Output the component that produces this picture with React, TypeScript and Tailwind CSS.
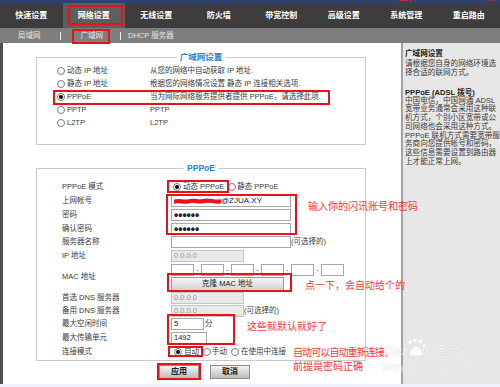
import React from "react";

const FONT = "font-['Liberation_Sans','Noto_Sans_CJK_SC',sans-serif]";

function Radio({ checked }: { checked?: boolean }) {
  return (
    <span className="w-[8px] h-[8px] rounded-full border border-[#7a7a7a] bg-white flex items-center justify-center shrink-0">
      {checked && <span className="w-[4px] h-[4px] rounded-full bg-black" />}
    </span>
  );
}

function Inp({ w, children, disabled }: { w: string; children?: React.ReactNode; disabled?: boolean }) {
  return (
    <div
      className={`${w} h-[12px] border flex items-center px-[2px] text-[7.5px] leading-[10px] overflow-hidden whitespace-nowrap ${
        disabled ? "bg-[#e9e9e9] border-[#c6c6c6] text-[#9a9a9a]" : "bg-white border-[#a8a8a8] text-[#222]"
      }`}
    >
      {children}
    </div>
  );
}

function Row({ h, label, children }: { h: string; label: string; children?: React.ReactNode }) {
  return (
    <div className={`${h} flex items-center pl-[25px]`}>
      <div className="w-[109px] text-[7.5px] leading-[10px] text-[#3a3a3a] whitespace-nowrap">{label}</div>
      <div className="flex items-center">{children}</div>
    </div>
  );
}

function WanRow({ checked, label, desc }: { checked?: boolean; label: string; desc: string }) {
  return (
    <div className="h-[13px] flex items-center pl-[20px] text-[7.5px] leading-[10px] text-[#3a3a3a] whitespace-nowrap">
      <div className="w-[93px] flex items-center gap-[2px]">
        <Radio checked={checked} />
        <span>{label}</span>
      </div>
      <span>{desc}</span>
    </div>
  );
}

function Box({ c }: { c: string }) {
  return <div className={`absolute border-2 border-[#e8121b] ${c}`} />;
}

const NAV = ["快速设置", "网络设置", "无线设置", "防火墙", "带宽控制", "高级设置", "系统管理", "重启路由"];

export default function App() {
  return (
    <div className={`relative w-[500px] h-[387px] overflow-hidden bg-white ${FONT}`}>
      {/* top strip */}
      <div className="h-[3px] bg-[#2c4372] relative overflow-hidden">
        <span className="absolute right-[4px] -top-[9px] text-[10px] leading-[12px] text-[#e2231a] whitespace-nowrap">
          固件: V1.24.1405.5 版
        </span>
      </div>
      {/* main nav */}
      <div className="h-[25px] bg-[#3d3d3d] flex">
        {NAV.map((t) => (
          <div
            key={t}
            className={`flex-1 flex items-center justify-center text-white font-bold text-[8px] leading-[10px] ${
              t === "网络设置" ? "bg-[#5e5e5e]" : ""
            }`}
          >
            {t}
          </div>
        ))}
      </div>
      {/* sub nav */}
      <div className="h-[15px] bg-[#7e7e7e] flex items-center pl-[18px] text-[7.5px] leading-[10px] text-[#e6e6e6] whitespace-nowrap">
        <span>局域网</span>
        <span className="ml-[19px] w-px h-[8px] bg-[#e8e8e8]" />
        <span className="ml-[20px]">广域网</span>
        <span className="ml-[17px] w-px h-[8px] bg-[#e8e8e8]" />
        <span className="ml-[7px]">DHCP 服务器</span>
      </div>

      {/* body */}
      <div className="h-[341px] flex">
        <div className="w-[3px] bg-[#4e4e4e]" />
        <div className="w-[398px] bg-white pl-[33px] pt-[14px]">
          {/* fieldset 1 */}
          <div className="relative w-[330px] h-[88px] border border-[#c9c9c9] pt-[6px]">
            <span className="absolute -top-[7px] left-1/2 -translate-x-1/2 bg-white px-[3px] text-[8.5px] leading-[12px] font-bold text-[#2b7fd4] whitespace-nowrap">
              广域网设置
            </span>
            <WanRow label="动态 IP 地址" desc="从您的网络中自动获取 IP 地址." />
            <WanRow label="静态 IP 地址" desc="根据您的网络情况设置 静态 IP 连接相关选项." />
            <WanRow checked label="PPPoE" desc="当为网际网络服务提供者提供 PPPoE，请选择此项." />
            <WanRow label="PPTP" desc="PPTP" />
            <WanRow label="L2TP" desc="L2TP" />
          </div>

          {/* fieldset 2 */}
          <div className="relative mt-[23px] w-[330px] h-[193px] border border-[#c9c9c9] pt-[11px]">
            <span className="absolute -top-[7px] left-1/2 -translate-x-1/2 bg-white px-[3px] text-[8.5px] leading-[12px] font-bold text-[#2b7fd4] whitespace-nowrap">
              PPPoE
            </span>
            <Row h="h-[14px]" label="PPPoE 模式">
              <div className="flex items-center text-[7.5px] leading-[10px] text-[#3a3a3a] whitespace-nowrap">
                <span className="ml-[2px]">
                  <Radio checked />
                </span>
                <span className="ml-[2px]">动态 PPPoE</span>
                <span className="ml-[4px]">
                  <Radio />
                </span>
                <span className="ml-[1px]">静态 PPPoE</span>
              </div>
            </Row>
            <Row h="h-[14px]" label="上网帐号">
              <Inp w="w-[120px]">
                <svg width="47" height="7" viewBox="0 0 47 7" className="shrink-0">
                  <path
                    d="M1 3.5 C6 2.2 10 4.8 15 3.2 S25 4.6 30 3 S40 4.4 46 3.4"
                    stroke="#e8121b"
                    strokeWidth="4.2"
                    strokeLinecap="round"
                    fill="none"
                  />
                </svg>
                <span className="text-[8px]">@ZJUA.XY</span>
              </Inp>
            </Row>
            <Row h="h-[14px]" label="密码">
              <Inp w="w-[120px]">
                <span className="text-[12px] leading-[10px] font-bold">••••••</span>
              </Inp>
            </Row>
            <Row h="h-[13px]" label="确认密码">
              <Inp w="w-[120px]">
                <span className="text-[12px] leading-[10px] font-bold">••••••</span>
              </Inp>
            </Row>
            <Row h="h-[14px]" label="服务器名称">
              <Inp w="w-[120px]" />
              <span className="text-[7.5px] leading-[10px] text-[#3a3a3a] whitespace-nowrap">(可选择的)</span>
            </Row>
            <Row h="h-[13px]" label="IP 地址">
              <Inp w="w-[73px]" disabled>
                0.0.0.0
              </Inp>
            </Row>
            <Row h="h-[29px]" label="MAC 地址">
              <div className="flex flex-col gap-[1px] pt-[1px] self-start">
                <div className="flex items-center h-[12px]">
                  {[0, 1, 2, 3, 4, 5].map((i) => (
                    <React.Fragment key={i}>
                      {i > 0 && (
                        <span className="w-[7px] text-center text-[7px] leading-[10px] text-[#555]">-</span>
                      )}
                      <Inp w="w-[23px]" />
                    </React.Fragment>
                  ))}
                </div>
                <div className="w-[113px] h-[14px] border border-[#9a9a9a] bg-linear-to-b from-[#f8f8f8] to-[#d2d2d2] flex items-center justify-center text-[7.5px] leading-[10px] text-[#222] whitespace-nowrap">
                  克隆 MAC 地址
                </div>
              </div>
            </Row>
            <Row h="h-[13px]" label="首选 DNS 服务器">
              <Inp w="w-[73px]" disabled>
                0.0.0.0
              </Inp>
            </Row>
            <Row h="h-[13px]" label="备用 DNS 服务器">
              <Inp w="w-[73px]" disabled>
                0.0.0.0
              </Inp>
              <span className="text-[7.5px] leading-[10px] text-[#3a3a3a] whitespace-nowrap">(可选择的)</span>
            </Row>
            <Row h="h-[14px]" label="最大空闲时间">
              <Inp w="w-[33px]">5</Inp>
              <span className="ml-[1px] text-[7.5px] leading-[10px] text-[#3a3a3a]">分</span>
            </Row>
            <Row h="h-[14px]" label="最大传输单元">
              <Inp w="w-[36px]">1492</Inp>
            </Row>
            <Row h="h-[14px]" label="连接模式">
              <div className="flex items-center text-[7.5px] leading-[10px] text-[#3a3a3a] whitespace-nowrap">
                <span className="ml-[3px]">
                  <Radio checked />
                </span>
                <span className="ml-[2px]">自动</span>
                <span className="ml-[4px]">
                  <Radio />
                </span>
                <span className="ml-[1px]">手动</span>
                <span className="ml-[4px]">
                  <Radio />
                </span>
                <span className="ml-[2px]">在使用中连接</span>
              </div>
            </Row>
          </div>

          {/* buttons */}
          <div className="flex gap-[11px] mt-[4px] ml-[123px]">
            <div className="w-[40px] h-[14px] border border-[#8c8c8c] bg-linear-to-b from-[#f6f6f6] to-[#bcbcbc] flex items-center justify-center text-[8px] leading-[10px] font-bold text-[#222]">
              应用
            </div>
            <div className="w-[40px] h-[14px] border border-[#8c8c8c] bg-linear-to-b from-[#f6f6f6] to-[#bcbcbc] flex items-center justify-center text-[8px] leading-[10px] font-bold text-[#222]">
              取消
            </div>
          </div>
        </div>

        {/* sidebar */}
        <div className="w-[99px] border-l-2 border-[#a3a3a3] bg-[#e7e7e7] pl-[2px] pt-[6px] text-[7.6px] leading-[8.75px] text-[#3a3a3a] whitespace-nowrap">
          <div className="font-bold text-[#222] leading-[9px]">广域网设置</div>
          <div className="mt-[2px]">
            请根据您自身的网络环境选
            <br />
            择合适的联网方式。
          </div>
          <div className="mt-[10px] font-bold text-[#222] leading-[9px]">PPPoE (ADSL 拨号)</div>
          <div>
            中国电信，中国网通 ADSL
            <br />
            宽带业务通常会采用这种联
            <br />
            机方式，个别小区宽带或公
            <br />
            司网络也会采用这种方式。
            <br />
            PPPoE 联机方式需要宽带服
            <br />
            务商向您提供帐号和密码，
            <br />
            这些信息需要设置到路由器
            <br />
            上才能正常上网。
          </div>
        </div>
      </div>
      <div className="h-[3px] bg-[#eef2f8]" />

      {/* annotation boxes */}
      <Box c="left-[68px] top-[5px] w-[55px] h-[20px]" />
      <Box c="left-[72px] top-[29px] w-[38px] h-[15px]" />
      <Box c="left-[53px] top-[90px] w-[277px] h-[15px]" />
      <Box c="left-[167px] top-[180px] w-[62px] h-[13px]" />
      <Box c="left-[166px] top-[194px] w-[131px] h-[41px]" />
      <Box c="left-[167px] top-[273px] w-[125px] h-[19px]" />
      <Box c="left-[167px] top-[314px] w-[68px] h-[31px]" />
      <Box c="left-[168px] top-[346px] w-[35px] h-[11px]" />
      <Box c="left-[157px] top-[363px] w-[44px] h-[17px]" />

      {/* annotation text */}
      <div className="absolute left-[308px] top-[200px] text-[10px] leading-[14px] text-[#f23a3a] whitespace-nowrap">
        输入你的闪讯账号和密码
      </div>
      <div className="absolute left-[305px] top-[279px] text-[10px] leading-[14px] text-[#f23a3a] whitespace-nowrap">
        点一下，会自动给个的
      </div>
      <div className="absolute left-[247px] top-[320px] text-[10px] leading-[14px] text-[#f23a3a] whitespace-nowrap">
        这些就默认就好了
      </div>
      <div className="absolute left-[293px] top-[346px] text-[10px] leading-[14px] text-[#f23a3a] whitespace-nowrap">
        <div className="tracking-[-0.9px]">自动可以自动重新连接，</div>
        <div>前提是密码正确</div>
      </div>

      {/* watermark */}
      <div className="absolute left-[383px] top-[336px] text-white/80 [text-shadow:0_0_1px_rgba(0,0,0,0.18)] whitespace-nowrap">
        <div className="flex items-end h-[22px]">
          <span className="text-[15px] leading-[16px] font-bold italic">Bai</span>
          <svg width="22" height="20" viewBox="0 0 22 20" className="-ml-[1px] opacity-80">
            <circle cx="5" cy="4" r="2.3" fill="#fff" stroke="#ddd" strokeWidth="0.5" />
            <circle cx="10" cy="2.6" r="2.3" fill="#fff" stroke="#ddd" strokeWidth="0.5" />
            <circle cx="15.5" cy="3.4" r="2.3" fill="#fff" stroke="#ddd" strokeWidth="0.5" />
            <circle cx="19" cy="8" r="2" fill="#fff" stroke="#ddd" strokeWidth="0.5" />
            <path d="M5 18 C3 14 7 8 11 8 C15 8 19 14 17 18 Z" fill="#fff" stroke="#ddd" strokeWidth="0.5" />
          </svg>
          <span className="-ml-[14px] text-[13px] leading-[14px] font-bold">du</span>
          <span className="ml-[4px] text-[13px] leading-[15px]">经验</span>
        </div>
        <div className="text-[10px] leading-[14px] tracking-[0.3px] mt-[2px]">jingyan.baidu.com</div>
      </div>
    </div>
  );
}
